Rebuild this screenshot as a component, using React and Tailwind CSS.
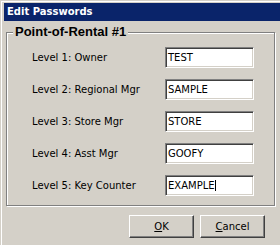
export default function App() {
  const rows = [
    ['Level 1: Owner', 'TEST'],
    ['Level 2: Regional Mgr', 'SAMPLE'],
    ['Level 3: Store Mgr', 'STORE'],
    ['Level 4: Asst Mgr', 'GOOFY'],
    ['Level 5: Key Counter', 'EXAMPLE'],
  ];

  return (
    <div className="w-[280px] h-[245px] overflow-hidden bg-[#d4d0c8] pt-px pl-px font-['DejaVu_Sans',sans-serif] text-[10px] text-black">
      <div className="h-full border-t border-l border-white pt-px pl-[2px]">
        {/* Title bar */}
        <div className="h-[18px] bg-[#0a246a] pl-[3px] flex items-center text-white font-bold text-[10px] leading-none">
          Edit Passwords
        </div>

        {/* Group box */}
        <fieldset className="m-0 ml-[2px] mt-[3px] w-[269px] border border-[#808080] shadow-[inset_1px_1px_0_#fff,1px_1px_0_#fff] px-0 pt-[7px] pb-[9px]">
          <legend className="ml-[6px] px-[2px] bg-[#d4d0c8] font-['Liberation_Sans',sans-serif] font-bold text-[13px] leading-[16px]">
            Point-of-Rental #1
          </legend>
          <div className="grid grid-cols-[133px_89px] gap-y-[11px] pl-[25px] items-center">
            {rows.map(([label, value], i) => (
              <div key={label} className="contents">
                <span className="leading-none">{label}</span>
                <div className="h-[21px] bg-white border border-[#808080] border-r-white border-b-white shadow-[inset_1px_1px_0_#404040,inset_-1px_-1px_0_#d4d0c8] pl-[2px] flex items-center leading-none">
                  {value}
                  {i === rows.length - 1 && <span className="inline-block w-px h-[11px] bg-black" />}
                </div>
              </div>
            ))}
          </div>
        </fieldset>

        {/* Buttons */}
        <div className="flex justify-end gap-[6px] mt-[9px] pr-[15px]">
          <button className="w-[65px] h-[23px] border border-white border-r-[#404040] border-b-[#404040] shadow-[inset_-1px_-1px_0_#808080] flex items-center justify-center leading-none">
            <span className="underline">O</span>K
          </button>
          <button className="w-[65px] h-[23px] border border-white border-r-[#404040] border-b-[#404040] shadow-[inset_-1px_-1px_0_#808080] flex items-center justify-center leading-none">
            <span className="underline">C</span>ancel
          </button>
        </div>
      </div>
    </div>
  );
}
